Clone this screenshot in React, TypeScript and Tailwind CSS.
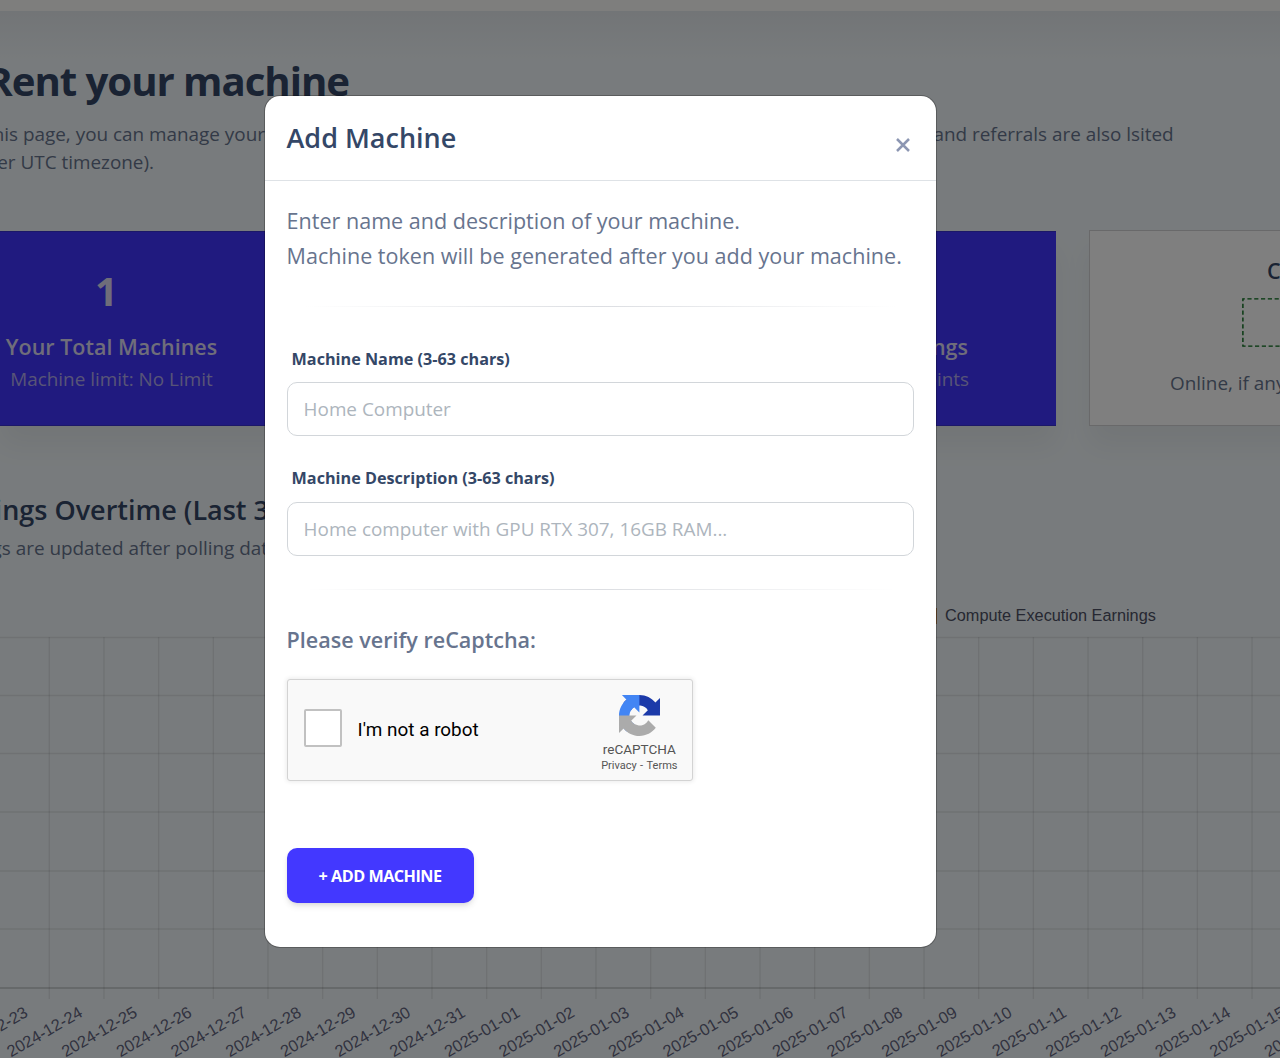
import React from "react";

const DATES = [
  "2024-12-23", "2024-12-24", "2024-12-25", "2024-12-26", "2024-12-27", "2024-12-28",
  "2024-12-29", "2024-12-30", "2024-12-31", "2025-01-01", "2025-01-02", "2025-01-03",
  "2025-01-04", "2025-01-05", "2025-01-06", "2025-01-07", "2025-01-08", "2025-01-09",
  "2025-01-10", "2025-01-11", "2025-01-12", "2025-01-13", "2025-01-14", "2025-01-15",
  "2025-01-16",
];
const STEP = 54.67;
const ROWS = [637.5, 695.5, 753.5, 812, 871, 929];

function EarningsChart() {
  return (
    <svg width="1280" height="432" viewBox="0 626 1280 432" className="block">
      {ROWS.map((y) => (
        <line key={y} x1="0" x2="1280" y1={y} y2={y} stroke="#000" strokeOpacity="0.08" strokeWidth="1.4" />
      ))}
      {DATES.map((d, i) => (
        <line key={d} x1={49.3 + i * STEP} x2={49.3 + i * STEP} y1="637" y2="999" stroke="#000" strokeOpacity="0.08" strokeWidth="1.4" />
      ))}
      <line x1="0" x2="1280" y1="988" y2="988" stroke="#000" strokeOpacity="0.2" strokeWidth="1.4" />
      {DATES.map((d, i) => (
        <text
          key={d}
          transform={`translate(${29 + i * STEP} 1015.7) rotate(-30)`}
          textAnchor="end"
          fill="#62647e"
          fontSize="16.4"
          fontFamily="Liberation Sans, Arial, sans-serif"
        >
          {d}
        </text>
      ))}
    </svg>
  );
}

function RecaptchaLogo() {
  return (
    <svg width="41" height="41" viewBox="0 0 64 64" className="block">
      <path fill="#1c3aa9" d="M64 31.955l-.033-1.37V4.687l-7.16 7.16C50.948 4.674 42.033.093 32.05.093c-10.4 0-19.622 4.96-25.458 12.64l11.736 11.86a15.55 15.55 0 0 1 4.754-5.334c2.05-1.6 4.952-2.906 8.968-2.906.485 0 .86.057 1.135.163 4.976.393 9.288 3.14 11.828 7.124l-8.307 8.307L64 31.953" />
      <path fill="#4285f4" d="M31.862.094l-1.37.033H4.594l7.16 7.16C4.58 13.147 0 22.06 0 32.046c0 10.4 4.96 19.622 12.64 25.458L24.5 45.768a15.55 15.55 0 0 1-5.334-4.754c-1.6-2.05-2.906-4.952-2.906-8.968 0-.485.057-.86.163-1.135.393-4.976 3.14-9.288 7.124-11.828l8.307 8.307L31.86.095" />
      <path fill="#ababab" d="M.001 32.045l.033 1.37v25.898l7.16-7.16c5.86 7.173 14.774 11.754 24.76 11.754 10.4 0 19.622-4.96 25.458-12.64l-11.736-11.86a15.55 15.55 0 0 1-4.754 5.334c-2.05 1.6-4.952 2.906-8.968 2.906-.485 0-.86-.057-1.135-.163-4.976-.393-9.288-3.14-11.828-7.124l8.307-8.307c-10.522.04-22.4.066-27.295-.005" />
    </svg>
  );
}

function Page() {
  return (
    <div className="flex h-[1058px] w-[1280px] flex-col overflow-hidden whitespace-nowrap bg-[#f1f7fa] text-[#67748e]">
      <div className="h-[11px] shrink-0 bg-[#fcfdfa]" />
      <div className="h-[219px] shrink-0 bg-[linear-gradient(#e5eaee,#f1f7fa_50px)] pt-[42px]">
        <h1 className="flex h-[56px] w-[349px] justify-end text-[40.2px] font-bold leading-[56px] tracking-[-1.05px] text-[#344767]">
          Rent your machine
        </h1>
        <div className="mt-[11px] flex text-[18.9px] leading-[28px]">
          <p className="flex w-[265px] justify-end">On this page, you can manage your</p>
          <p className="ml-[668.5px]">and referrals are also lsited</p>
        </div>
        <p className="flex w-[154px] justify-end text-[18.9px] leading-[28px]">(per UTC timezone).</p>
      </div>
      <div className="flex h-[196px] shrink-0">
        <section className="mt-px flex h-[195px] w-[501px] shrink-0 flex-col border-y border-[#3830d0] bg-[#4034ff] text-[#dedaf5] shadow-[0_20px_27px_rgba(0,0,0,0.05)]">
          <div className="flex w-[223px] flex-col items-center pt-[31px]">
            <div className="mr-[10px] text-[40px] font-bold leading-[56px]">1</div>
            <div className="mt-[11px] text-[21.5px] font-semibold leading-[34px]">Your Total Machines</div>
            <div className="text-[18.9px] leading-[30px] text-[#b0a9ee]">Machine limit: No Limit</div>
          </div>
        </section>
        <section className="ml-[33px] mt-px flex h-[195px] w-[522px] shrink-0 flex-col border-y border-[#3830d0] bg-[#4034ff] text-[#dedaf5] shadow-[0_20px_27px_rgba(0,0,0,0.05)]">
          <div className="flex w-[435px] flex-col items-end pt-[98px]">
            <div className="mr-px text-[21.5px] font-semibold leading-[34px]">Your Total Earnings</div>
            <div className="text-[18.9px] leading-[30px] text-[#b0a9ee]">Points</div>
          </div>
        </section>
        <section className="ml-[33px] h-[196px] w-[500px] shrink-0 border border-[#d2d2d4] bg-white shadow-[0_20px_27px_rgba(0,0,0,0.05)]">
          <div className="ml-[177px] mt-[23px] text-[21.5px] font-semibold leading-[34px] text-[#344767]">Connected</div>
          <svg width="200" height="49" viewBox="0 0 200 49" className="ml-[152px] mt-[10px] block">
            <path d="M200 .9H.9v47.2H200" fill="none" stroke="#006a14" strokeWidth="1.4" strokeDasharray="4.2 2.6" />
          </svg>
          <div className="ml-[80px] mt-[20px] text-[18.9px] leading-[32px]">Online, if any</div>
        </section>
      </div>
      <div className="h-[179px] shrink-0 pt-[64px]">
        <h2 className="flex w-[269px] justify-end text-[27px] font-semibold leading-[40px] text-[#344767]">Earnings Overtime (Last 3</h2>
        <p className="mt-[3px] flex w-[268px] justify-end text-[18.9px] leading-[30px]">Earnings are updated after polling dat</p>
      </div>
      <div className="flex h-[21px] shrink-0 items-center pl-[889px] font-['Liberation_Sans',Arial,sans-serif] text-[16.3px] leading-[21px] text-[#4d5064]">
        <span className="mr-[8px] h-[16px] w-[48px] bg-[#d9965a]" />
        Compute Execution Earnings
      </div>
      <EarningsChart />
    </div>
  );
}

function Divider() {
  return <div className="h-[1.4px] w-full bg-[linear-gradient(90deg,transparent_3%,#dcdee2_50%,transparent_97%)]" />;
}

function Field({ label, placeholder }: { label: string; placeholder: string }) {
  return (
    <label className="flex flex-col">
      <span className="ml-[5px] text-[16.2px] font-bold leading-[24.5px] text-[#344767]">{label}</span>
      <input
        className="mt-[11px] h-[54px] w-full rounded-[10px] border-[1.4px] border-[#d2d6da] bg-white px-[16px] text-[18.9px] text-[#495057] outline-none placeholder:text-[#adb5bd]"
        placeholder={placeholder}
      />
    </label>
  );
}

function AddMachineModal() {
  return (
    <div className="absolute inset-0 flex items-start justify-center bg-black/50 pt-[96px]">
      <div role="dialog" className="-ml-[79px] flex h-[851px] w-[671px] flex-col rounded-[15px] bg-white shadow-[0_0_0_1px_rgba(0,0,0,0.25)]">
        <header className="flex h-[85px] shrink-0 justify-between border-b border-[#dee2e6] pl-[21.5px] pr-[24.6px]">
          <h5 className="mt-[23px] text-[27px] font-semibold leading-[38px] text-[#344767]">Add Machine</h5>
          <button aria-label="Close" className="mt-[41px] h-[16px]">
            <svg width="16" height="16" viewBox="0 0 16 16" className="block">
              <path d="M2 2l12 12M14 2L2 14" stroke="#8c96b2" strokeWidth="2.5" />
            </svg>
          </button>
        </header>
        <div className="flex flex-col items-stretch pl-[21.6px] pr-[22px] pt-[22px]">
          <p className="whitespace-nowrap text-[21.55px] leading-[35px] text-[#67748e]">
            Enter name and description of your machine.
            <br />
            Machine token will be generated after you add your machine.
          </p>
          <div className="mb-[39.2px] mt-[33px]"><Divider /></div>
          <Field label="Machine Name (3-63 chars)" placeholder="Home Computer" />
          <div className="h-[30px]" />
          <Field label="Machine Description (3-63 chars)" placeholder="Home computer with GPU RTX 307, 16GB RAM..." />
          <div className="mb-[32px] mt-[33px]"><Divider /></div>
          <h6 className="text-[21.55px] font-semibold leading-[36px] text-[#67748e]">Please verify reCaptcha:</h6>
          <div className="mt-[21px] flex h-[102px] w-[406.4px] items-center rounded-[3px] border-[1.4px] border-[#d3d3d3] bg-[#f9f9f9] font-['Roboto',sans-serif] shadow-[0_0_4px_1px_rgba(0,0,0,0.08)]">
            <span className="ml-[16px] mt-[-3px] h-[38px] w-[38px] rounded-[2px] border-[2.8px] border-[#c1c1c1] bg-white" />
            <span className="ml-[16px] text-[18.9px] text-black">I'm not a robot</span>
            <div className="ml-auto mr-[14.5px] flex flex-col items-center pt-[10px] text-[#555]">
              <RecaptchaLogo />
              <span className="mt-[5px] text-[13.5px] leading-[17px]">reCAPTCHA</span>
              <span className="text-[11px] leading-[16px] [word-spacing:0.7px]">Privacy&nbsp;-&nbsp;Terms</span>
            </div>
          </div>
          <button className="mt-[67.4px] h-[55px] w-[187px] rounded-[10px] bg-[#4338ff] pt-px text-[16.2px] font-bold tracking-[-0.5px] text-white shadow-[0_4px_7px_-1px_rgba(0,0,0,0.11),0_2px_4px_-1px_rgba(0,0,0,0.07)]">
            + ADD MACHINE
          </button>
        </div>
      </div>
    </div>
  );
}

export default function App() {
  return (
    <div className="relative h-[1058px] w-[1280px] overflow-hidden font-['Open_Sans',sans-serif]">
      <Page />
      <AddMachineModal />
    </div>
  );
}
